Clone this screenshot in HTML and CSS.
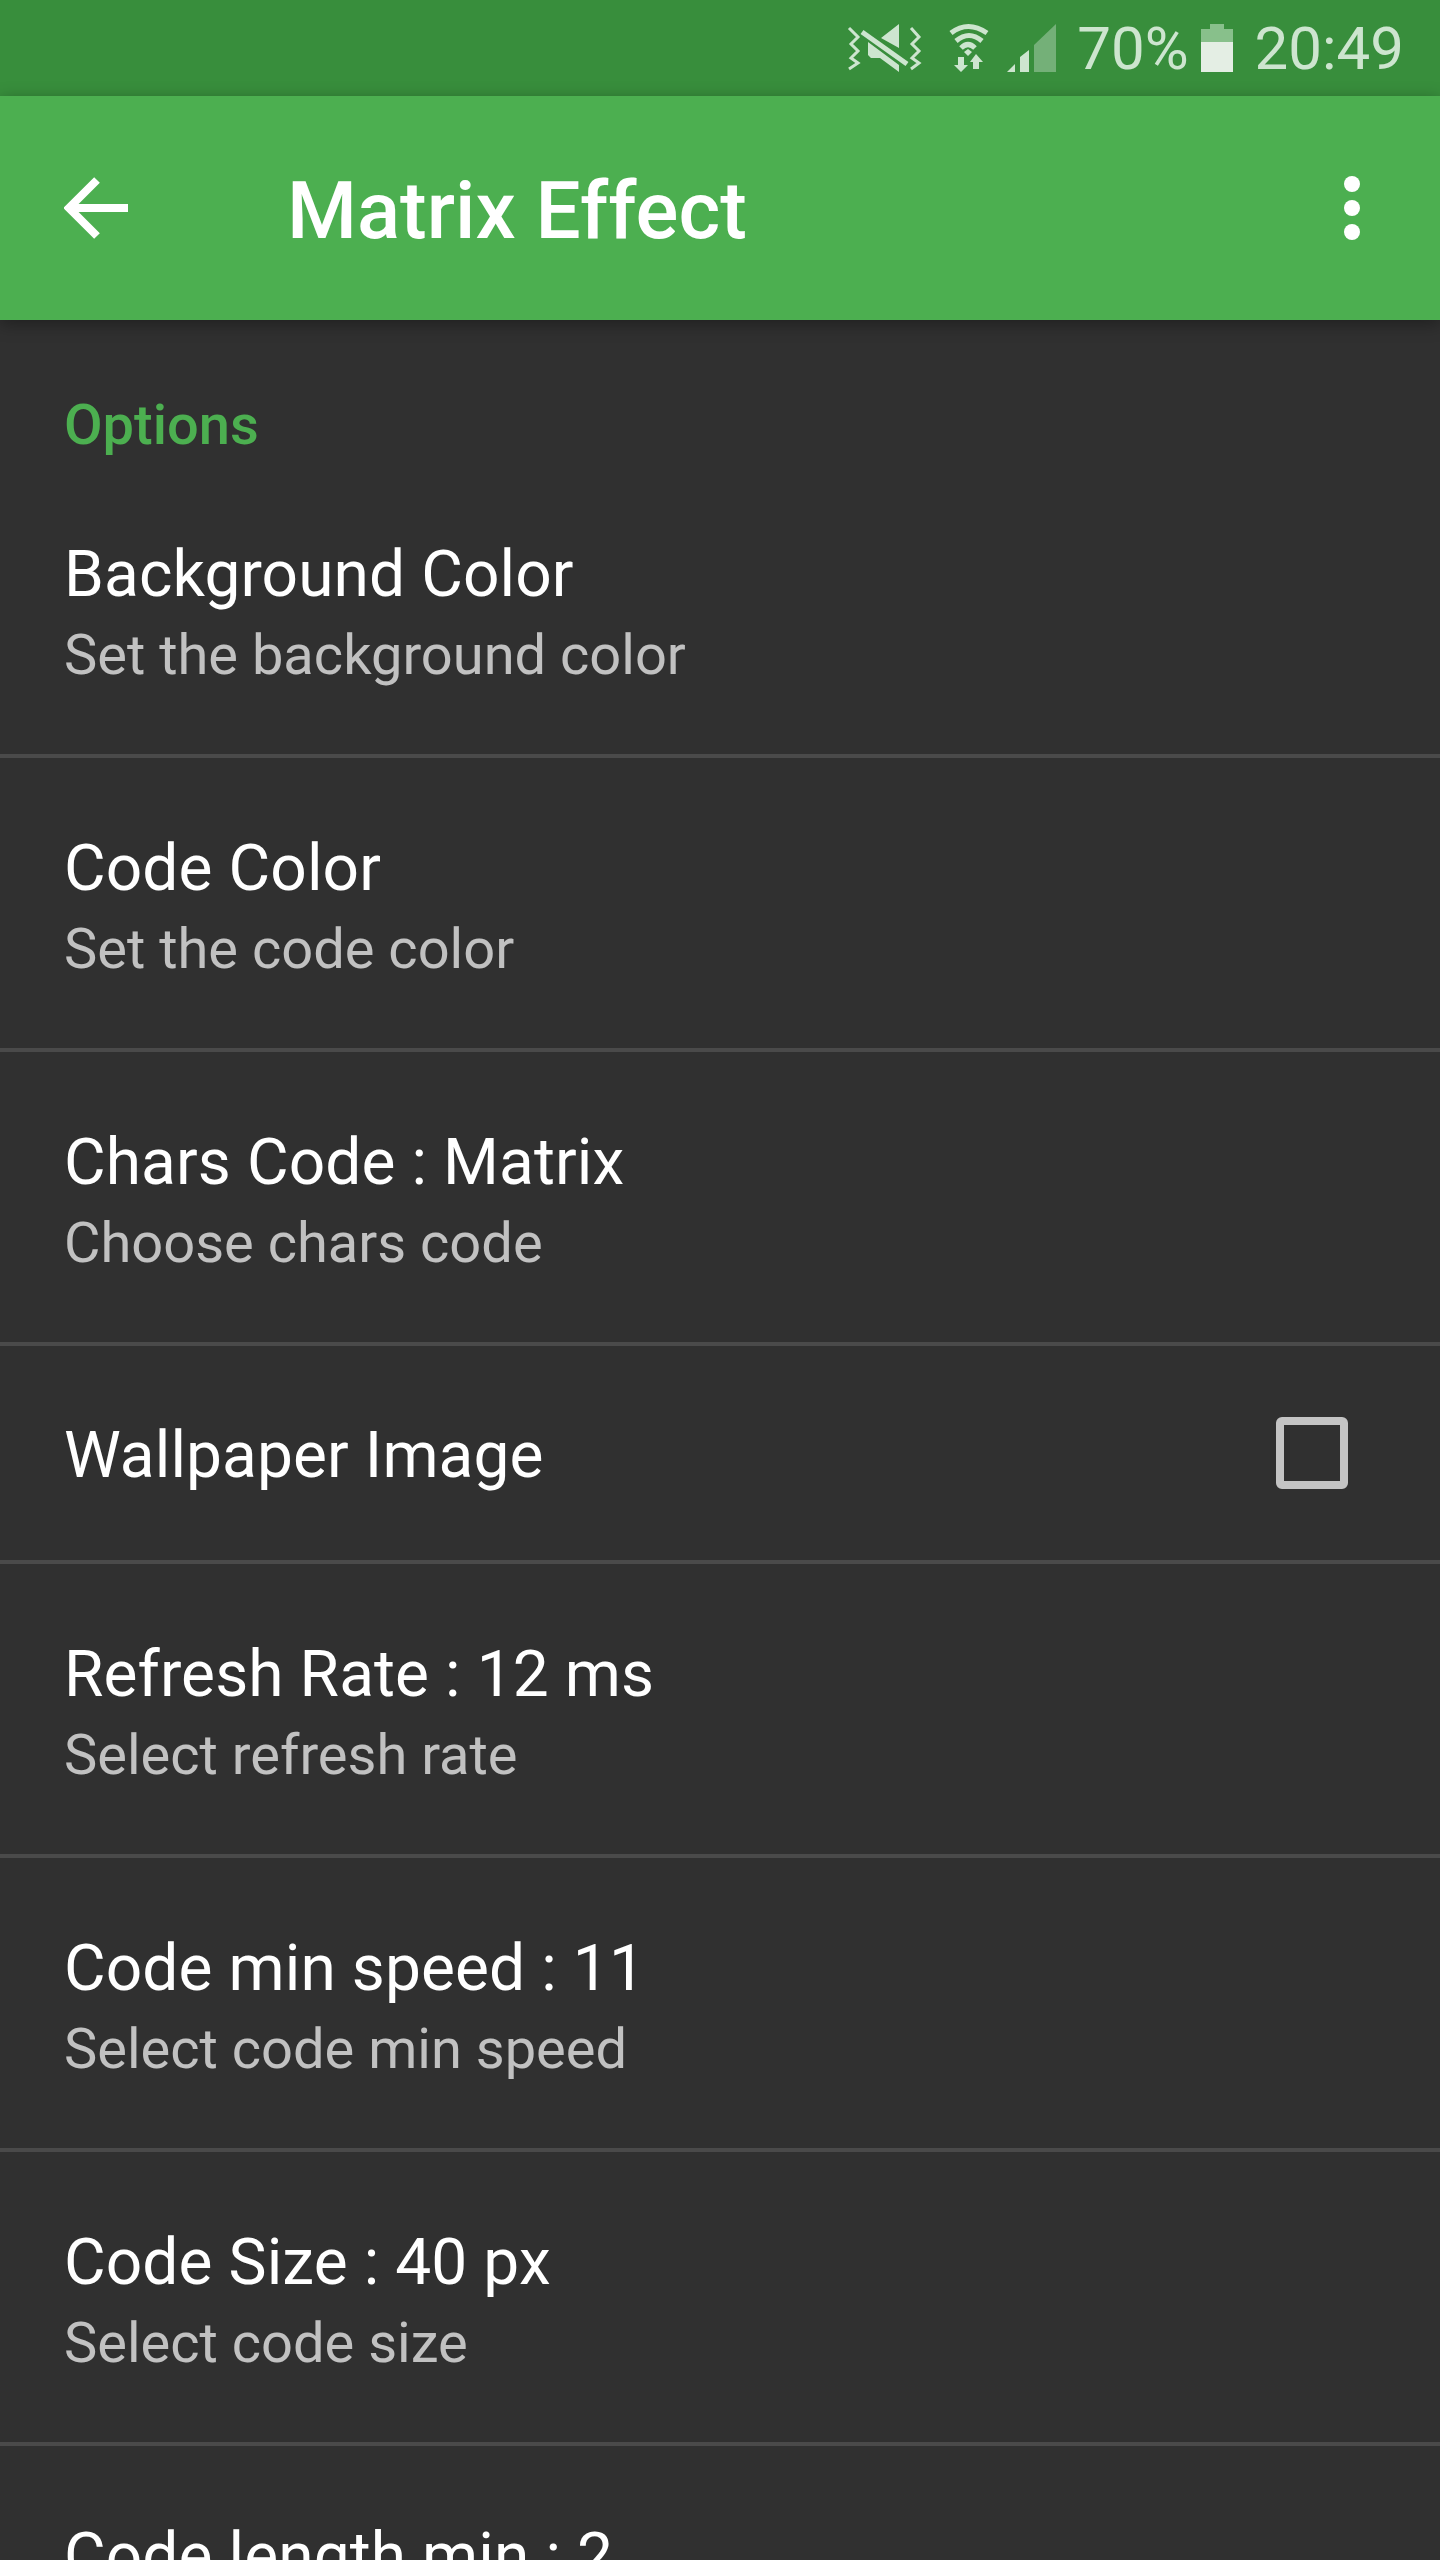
FILE: index.html
```html
<!DOCTYPE html>
<html>
<head>
    <title>Matrix Effect</title>
    <link rel="stylesheet" href="styles.css">
</head>
<body>
    <div class="status-bar">
        <svg class="icon-sound" width="76" height="96" viewBox="848 0 76 96">
            <path class="wave" d="M851 28l9 9-7 7 7 7-7 7 7 5-9 6M913 28l8 9-7 7 7 7-7 7 7 5-8 6"/>
            <path class="solid" d="M883 38l18-14v24zM870 42l31 23v7l-19-14h-9l-3-3z"/>
            <path class="slash" d="M864 32l45 32"/>
        </svg>
        <svg class="icon-wifi" width="44" height="96" viewBox="950 0 44 96">
            <path class="arc" d="M954 33Q971 20 990 33M959 41Q972 30 985 41M964 48Q971 41 978 48"/>
            <path class="solid" d="M967 52l4-3 4 3-4 4zM961 57h6v8h4l-7 7-7-7h4zM979 54l7 8h-4v7h-6v-7h-3z"/>
        </svg>
        <svg class="icon-signal" width="49" height="96" viewBox="1009 0 49 96">
            <path class="solid" d="M1009 72l8-8v8zM1022 57l9-7v22h-9z"/>
            <path class="dim" d="M1036 45l22-21v48h-22z"/>
        </svg>
        <span class="battery-pct">70%</span>
        <div class="battery">
            <div class="battery-cap"></div>
            <div class="battery-body"><div class="battery-level"></div></div>
        </div>
        <span class="clock">20:49</span>
    </div>

    <div class="app-bar">
        <svg class="icon-back" width="64" height="64" viewBox="0 0 64 64">
            <path d="M64 32H6M33 4L5 32l28 28"/>
        </svg>
        <h1 class="app-title">Matrix Effect</h1>
        <div class="overflow-menu"><span></span><span></span><span></span></div>
    </div>

    <div class="settings">
        <div class="category">Options</div>

        <div class="pref">
            <div class="pref-title">Background Color</div>
            <div class="pref-summary">Set the background color</div>
        </div>
        <div class="pref">
            <div class="pref-title">Code Color</div>
            <div class="pref-summary">Set the code color</div>
        </div>
        <div class="pref">
            <div class="pref-title">Chars Code : Matrix</div>
            <div class="pref-summary">Choose chars code</div>
        </div>
        <div class="pref pref-check">
            <div class="pref-title">Wallpaper Image</div>
            <div class="checkbox"></div>
        </div>
        <div class="pref">
            <div class="pref-title">Refresh Rate : 12 ms</div>
            <div class="pref-summary">Select refresh rate</div>
        </div>
        <div class="pref">
            <div class="pref-title">Code min speed : 11</div>
            <div class="pref-summary">Select code min speed</div>
        </div>
        <div class="pref">
            <div class="pref-title">Code Size : 40 px</div>
            <div class="pref-summary">Select code size</div>
        </div>
        <div class="pref">
            <div class="pref-title">Code length min : 2</div>
            <div class="pref-summary">Select code length min</div>
        </div>
    </div>
</body>
</html>
```

FILE: styles.css
```css
html, body {
    margin: 0;
    height: 2560px;
    overflow: hidden;
}
body {
    font-family: Roboto, sans-serif;
    background-color: #303030;
    color: #fff;
}

.status-bar {
    height: 96px;
    box-sizing: border-box;
    padding-right: 36px;
    background-color: #388e3c;
    color: #cde5cf;
    display: flex;
    align-items: center;
    justify-content: flex-end;
    font-size: 60px;
}
.status-bar svg { display: block; flex: none; }
.solid { fill: #cde5cf; }
.dim { fill: #74b078; }
.wave, .slash, .arc { fill: none; stroke: #cde5cf; }
.wave { stroke-width: 3; }
.slash { stroke-width: 5; }
.arc { stroke-width: 5; }
.icon-sound { margin-right: 25px; }
.icon-wifi { margin-right: 16px; }
.icon-signal { margin-right: 21px; }
.battery-pct { margin-right: 12px; }
.battery { width: 32px; margin-right: 22px; }
.battery-cap {
    width: 14px;
    height: 5px;
    margin: 0 auto;
    background-color: #88c08b;
}
.battery-body {
    height: 43px;
    background-color: #88c08b;
    display: flex;
    align-items: flex-end;
}
.battery-level {
    width: 100%;
    height: 30px;
    background-color: #e4eee4;
}

.app-bar {
    height: 224px;
    box-sizing: border-box;
    padding: 0 64px;
    background-color: #4caf50;
    display: flex;
    align-items: center;
    box-shadow: 0 4px 16px rgba(0, 0, 0, 0.35);
    position: relative;
}
.icon-back path {
    fill: none;
    stroke: #fff;
    stroke-width: 8;
}
.app-title {
    margin: 6px 0 0 159px;
    font-size: 80px;
    font-weight: 500;
    flex: 1;
}
.overflow-menu {
    display: flex;
    flex-direction: column;
    gap: 8px;
    margin-right: 16px;
}
.overflow-menu span {
    width: 16px;
    height: 16px;
    border-radius: 50%;
    background-color: #fff;
}

.category {
    padding: 73px 64px 0;
    height: 71px;
    font-size: 56px;
    line-height: 64px;
    font-weight: 500;
    color: #4caf50;
}
.pref {
    height: 294px;
    box-sizing: border-box;
    padding: 7px 64px 0;
    border-bottom: 4px solid #4a4a4a;
    display: flex;
    flex-direction: column;
    justify-content: center;
}
.pref-title {
    font-size: 64px;
    line-height: 84px;
    letter-spacing: 0.1px;
}
.pref-summary {
    font-size: 56px;
    line-height: 76px;
    color: rgba(255, 255, 255, 0.7);
}
.pref-check {
    height: 218px;
    padding-top: 0;
    flex-direction: row;
    align-items: center;
    justify-content: space-between;
}
.pref-check .pref-title { margin-top: 5px; }
.checkbox {
    width: 56px;
    height: 56px;
    margin-right: 28px;
    border: 8px solid #c4c4c4;
    border-radius: 6px;
}
```
